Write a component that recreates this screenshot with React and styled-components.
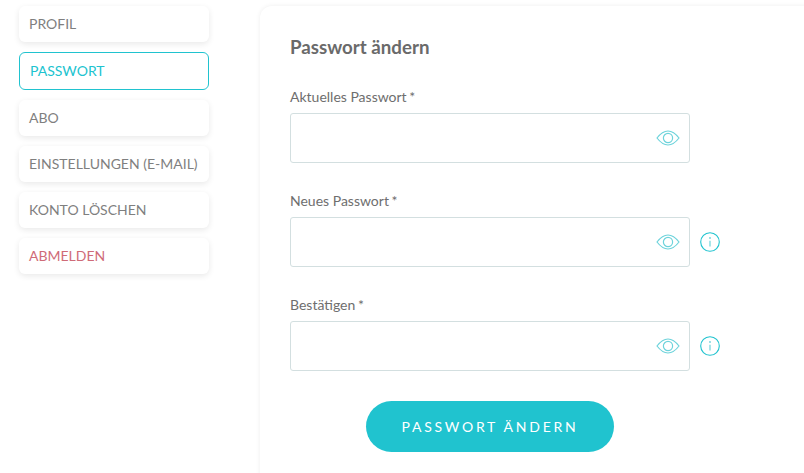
import React from "react";
import styled, { createGlobalStyle } from "styled-components";

const GlobalStyle = createGlobalStyle`
  html, body {
    margin: 0;
    height: 100%;
    overflow: hidden;
    background: #fff;
  }
  body {
    font-family: Lato, "Open Sans", sans-serif;
    color: #666;
  }
`;

const Page = styled.div`
  display: flex;
  align-items: flex-start;
  width: 804px;
  height: 473px;
  padding: 6px 0 0 19px;
  box-sizing: border-box;
  overflow: hidden;
`;

const Sidebar = styled.ul`
  list-style: none;
  margin: 0;
  padding: 0;
  width: 190px;
  flex-shrink: 0;
  display: flex;
  flex-direction: column;
  gap: 10px;
`;

const MenuItem = styled.li`
  display: flex;
  align-items: center;
  box-sizing: border-box;
  height: ${props => (props.$active ? "38px" : "36px")};
  padding: 0 0 2px 10px;
  border-radius: 6px;
  font-size: 14px;
  background: #fff;
  color: ${props => props.$color || "#7f7f7f"};
  border: ${props => (props.$active ? "1px solid #20c3cf" : "none")};
  box-shadow: ${props => (props.$active ? "none" : "0 2px 6px rgba(0, 0, 0, 0.09)")};
`;

const Card = styled.section`
  flex-shrink: 0;
  width: 560px;
  height: 520px;
  margin-left: 51px;
  padding: 31px 30px 0;
  box-sizing: border-box;
  border-radius: 12px;
  background: #fff;
  box-shadow: 0 0 5px rgba(0, 0, 0, 0.07);
`;

const Title = styled.h2`
  margin: 0 0 30px;
  font-size: 18.72px;
  line-height: 20px;
  font-weight: 700;
  color: #6a6a6a;
`;

const Field = styled.div`
  margin-bottom: 28px;
`;

const Label = styled.label`
  display: block;
  height: 26px;
  font-size: 14px;
  line-height: 20px;
  color: #6e6e6e;
`;

const Required = styled.span`
  margin-left: -1px;
`;

const InputRow = styled.div`
  display: flex;
  align-items: center;
  gap: 10px;
`;

const InputBox = styled.div`
  display: flex;
  align-items: center;
  justify-content: flex-end;
  box-sizing: border-box;
  width: 400px;
  height: 50px;
  padding: 0 9px 1px 0;
  border: 1px solid #d3dfe0;
  border-radius: 3px;
  background: #fff;
`;

const ButtonRow = styled.div`
  display: flex;
  justify-content: center;
  width: 400px;
  padding-top: 2px;
`;

const SubmitButton = styled.button`
  width: 248px;
  height: 51px;
  border: none;
  border-radius: 26px;
  background: #20c3cf;
  color: #fff;
  font-family: inherit;
  font-size: 14px;
  letter-spacing: 2.75px;
`;

function EyeIcon() {
  return (
    <svg width="24" height="16" viewBox="0 0 24 16" fill="none" stroke="#6dd3db" strokeWidth="1.2">
      <path d="M1 8 C5 2.8 8.5 1 12 1 C15.5 1 19 2.8 23 8 C19 13.2 15.5 15 12 15 C8.5 15 5 13.2 1 8 Z" />
      <circle cx="12" cy="8" r="4.6" />
    </svg>
  );
}

function InfoIcon() {
  return (
    <svg width="20" height="20" viewBox="0 0 20 20" fill="none">
      <circle cx="10" cy="10" r="9.3" stroke="#20c3cf" strokeWidth="1.1" />
      <circle cx="10" cy="6" r="0.9" fill="#6dd3db" />
      <path d="M10 8.8 V14.6" stroke="#6dd3db" strokeWidth="1.2" />
    </svg>
  );
}

const menu = [
  { label: "PROFIL" },
  { label: "PASSWORT", active: true, color: "#20c3cf" },
  { label: "ABO" },
  { label: "EINSTELLUNGEN (E-MAIL)" },
  { label: "KONTO LÖSCHEN" },
  { label: "ABMELDEN", color: "#cf6b78" },
];

const fields = [
  { label: "Aktuelles Passwort" },
  { label: "Neues Passwort", info: true },
  { label: "Bestätigen", info: true },
];

export default function App() {
  return (
    <Page>
      <GlobalStyle />
      <Sidebar>
        {menu.map(item => (
          <MenuItem key={item.label} $active={item.active} $color={item.color}>
            {item.label}
          </MenuItem>
        ))}
      </Sidebar>
      <Card>
        <Title>Passwort ändern</Title>
        {fields.map(field => (
          <Field key={field.label}>
            <Label>
              {field.label} <Required>*</Required>
            </Label>
            <InputRow>
              <InputBox>
                <EyeIcon />
              </InputBox>
              {field.info && <InfoIcon />}
            </InputRow>
          </Field>
        ))}
        <ButtonRow>
          <SubmitButton>PASSWORT ÄNDERN</SubmitButton>
        </ButtonRow>
      </Card>
    </Page>
  );
}
